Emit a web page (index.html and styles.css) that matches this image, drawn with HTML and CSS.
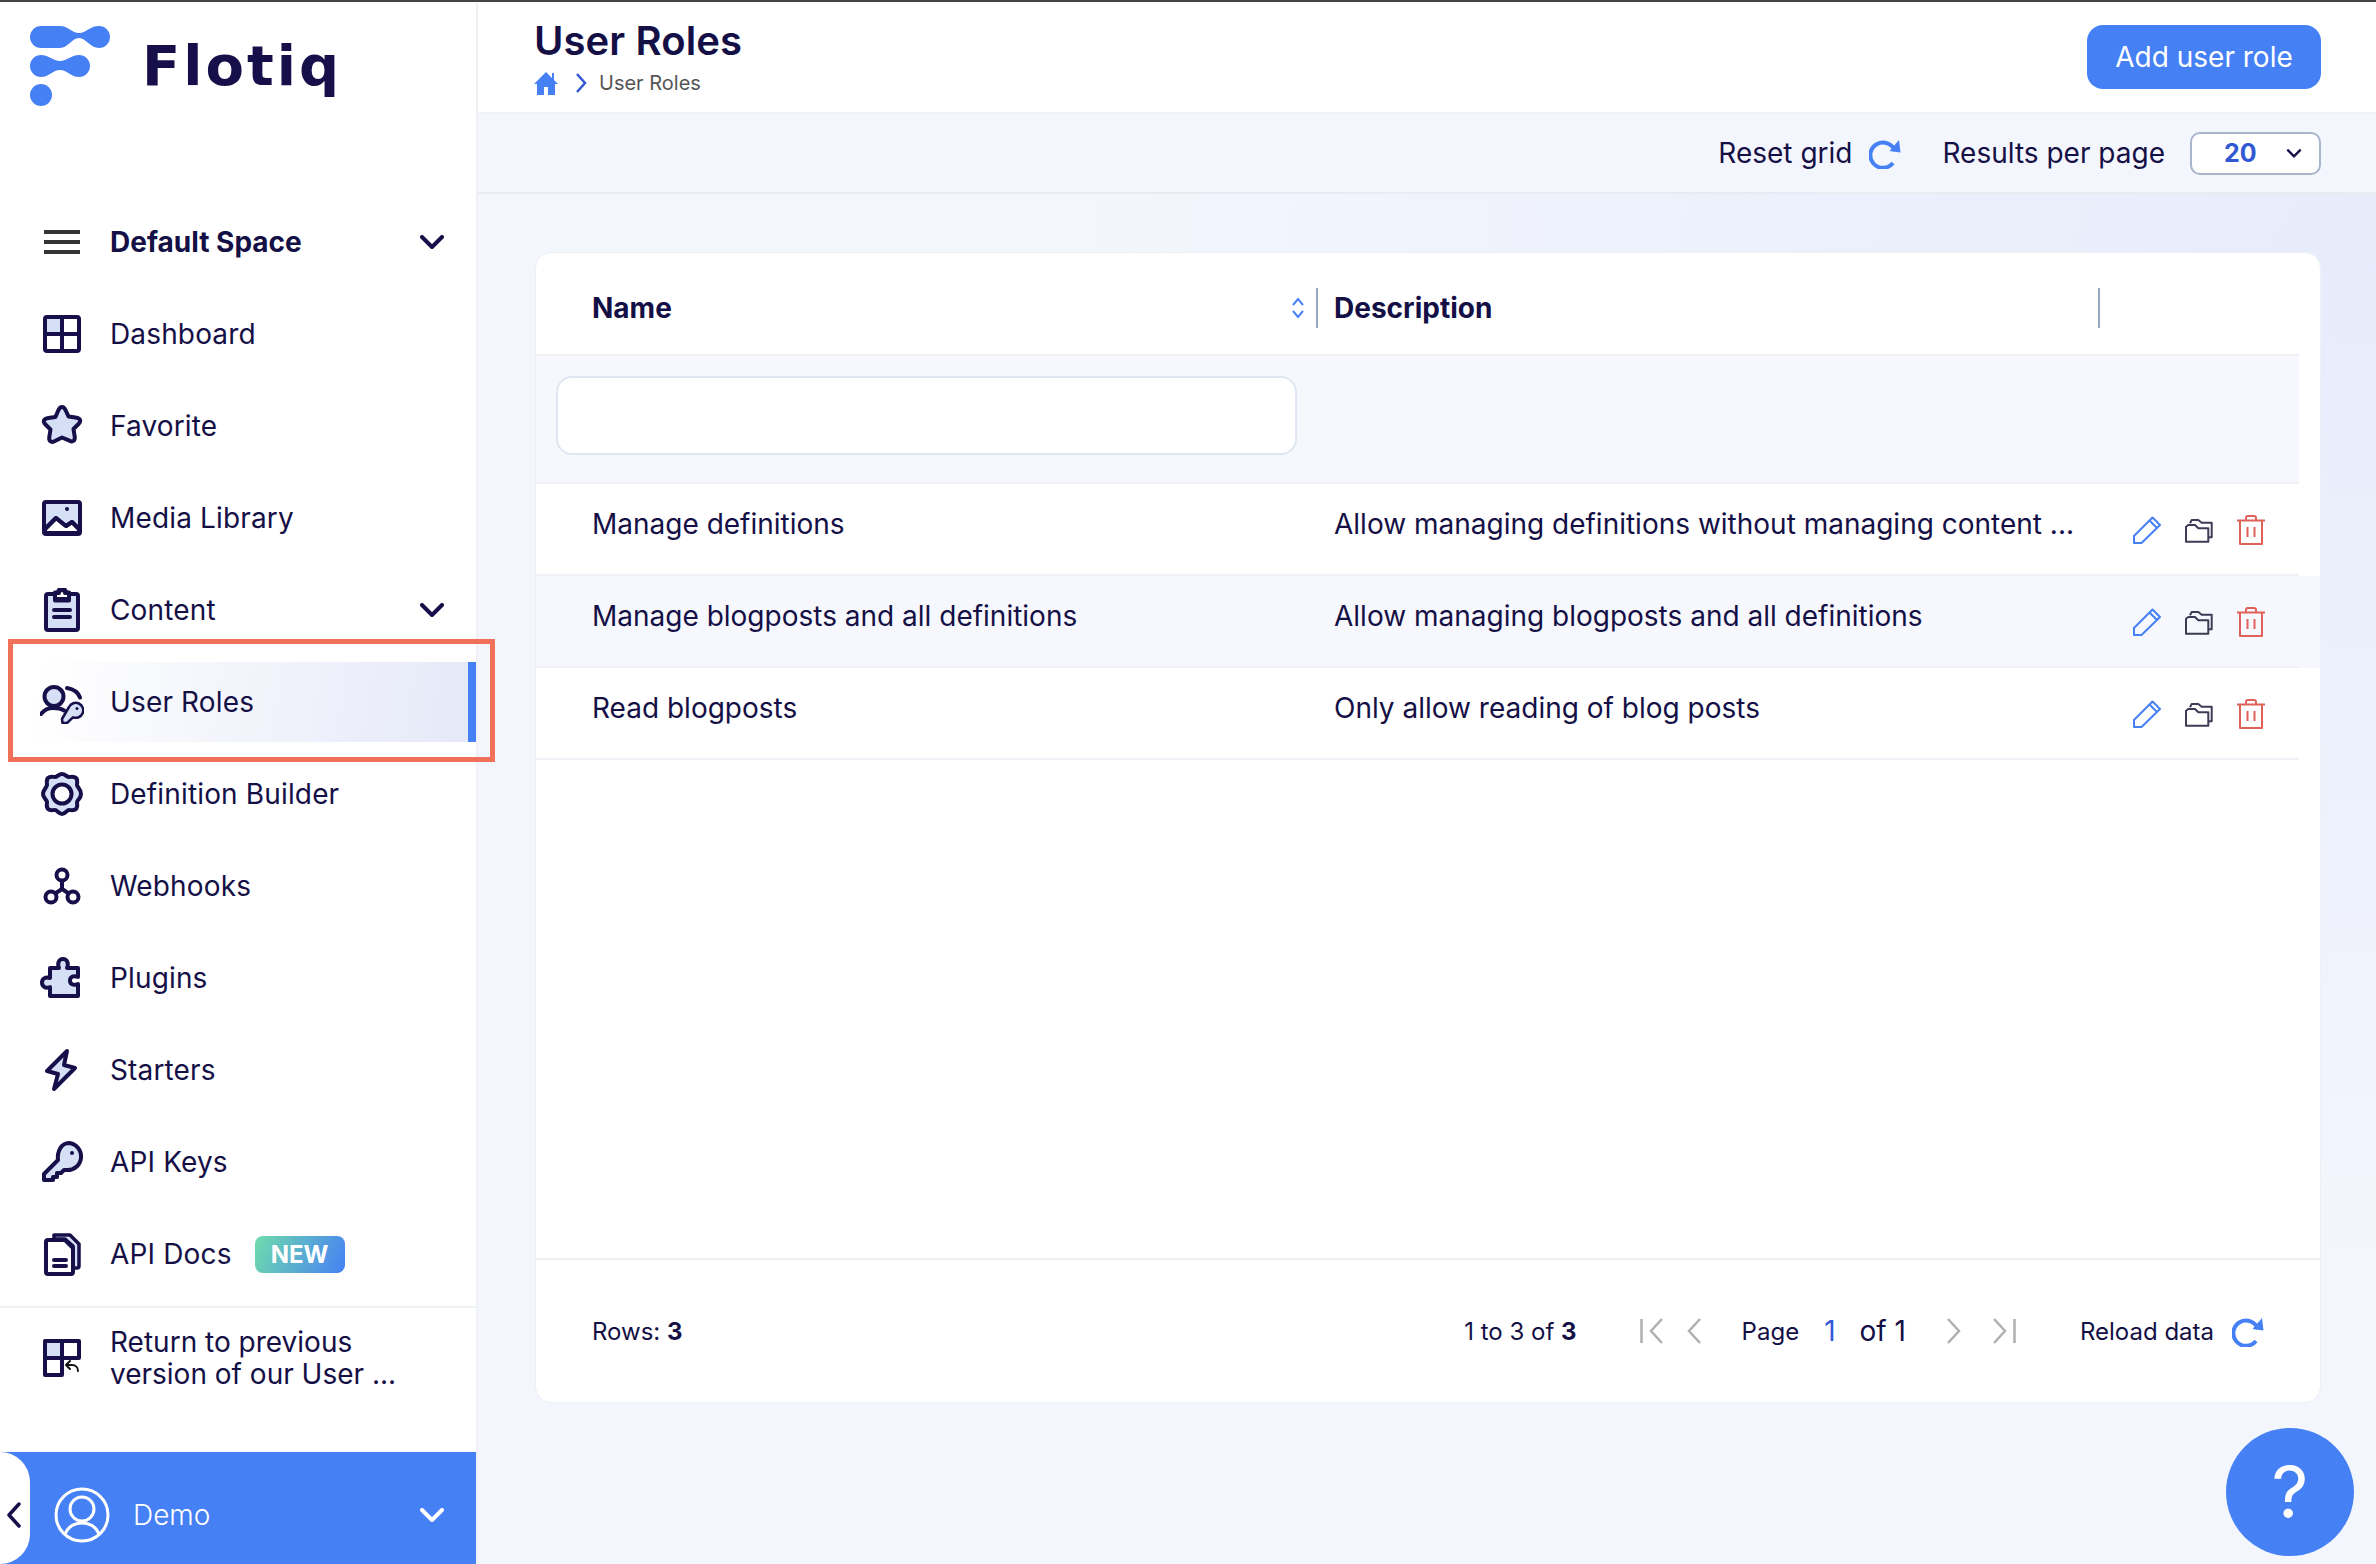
FILE: index.html
```html
<!DOCTYPE html>
<html lang="en">
  <head>
    <meta charset="UTF-8" />
    <title>User Roles</title>
    <link rel="stylesheet" href="styles.css">
  </head>
  <body>
    <svg class="defs" width="0" height="0">
      <symbol id="i-pencil" viewBox="0 0 28 28">
        <path d="M1 27v-7L19.500 1.500l7.500 7.500L8.500 27zM16.500 4.500l7.500 7.500" />
      </symbol>
      <symbol id="i-folder" viewBox="0 0 28 28">
        <path d="M1 25.700V10.700L3.300 9H10l3.300 3.300h10v13.400zM5 7.300L6.700 4h6.600l3.400 2.700h10v14.600H24" />
      </symbol>
      <symbol id="i-trash" viewBox="0 0 28 30">
        <path d="M0 5.500h28M3 5.500V29h22V5.500M9 5.500V3a2 2 0 0 1 2-2h6a2 2 0 0 1 2 2v2.500M10.500 12v10M17.500 12v10" />
      </symbol>
      <symbol id="i-reload" viewBox="0 0 32 32">
        <path class="stroke" d="M26 14A12.700 12.700 0 1 0 24 26" />
        <path class="solid" d="M30 3l1.500 12.500-11-1.500z" />
      </symbol>
      <symbol id="i-chevron" viewBox="0 0 24 14">
        <path d="M2 2l10 10L22 2" />
      </symbol>
    </svg>

    <aside class="sidebar">
      <div class="logo">
        <svg class="logo-mark" viewBox="0 0 80 80" width="80" height="80">
          <path d="M11 0H30C38 0 42 7 49 7C56 7 60 0 69 0A11 11 0 0 1 69 22C60 22 56 12 49 12C42 12 38 22 30 22H11A11 11 0 0 1 11 0Z" />
          <path d="M11 29C19 29 23 35 30 35C37 35 41 29 49 29A11 11 0 0 1 49 51C41 51 37 44 30 44C23 44 19 51 11 51A11 11 0 0 1 11 29Z" />
          <circle cx="11" cy="69" r="11" />
        </svg>
        <span class="logo-text">Flotiq</span>
      </div>

      <nav class="nav">
        <a class="nav-item nav-item-bold">
          <svg class="nav-icon" viewBox="0 0 44 44"><path class="bars" d="M4 12h36M4 22h36M4 32h36" /></svg>
          <span class="nav-label">Default Space</span>
          <svg class="nav-chevron"><use href="#i-chevron" /></svg>
        </a>
        <a class="nav-item">
          <svg class="nav-icon" viewBox="0 0 44 44">
            <path class="tint" d="M6 6h16v16H6z" />
            <rect x="5" y="5" width="34" height="34" rx="2" /><path d="M22 5v34M5 22h34" />
          </svg>
          <span class="nav-label">Dashboard</span>
        </a>
        <a class="nav-item">
          <svg class="nav-icon" viewBox="0 0 44 44">
            <path class="tinted" d="M22 3c2 0 3 1.500 4 4l2.500 5.500 7 1c5 .7 6 3.500 3 6.500l-5 5 1.200 7.500c.6 4-1.700 6-5.200 4.200L22 33.500l-7.500 3.700c-3.500 1.800-5.800-.2-5.200-4.200L10.500 25.500l-5-5c-3-3-2-5.800 3-6.500l7-1L18 7c1-2.500 2-4 4-4z" />
          </svg>
          <span class="nav-label">Favorite</span>
        </a>
        <a class="nav-item">
          <svg class="nav-icon" viewBox="0 0 44 44">
            <rect class="tinted" x="4" y="6" width="36" height="32" rx="2" />
            <path class="white" d="M5 33l11-11 10 8 6-4 7 7v4H5z" />
            <path d="M5 33l11-11 10 8 6-4 7 7" />
            <circle class="dot" cx="27" cy="13" r="2" />
          </svg>
          <span class="nav-label">Media Library</span>
        </a>
        <a class="nav-item">
          <svg class="nav-icon" viewBox="0 0 44 44">
            <rect class="tinted" x="6" y="6" width="32" height="36" rx="2" />
            <path class="white" d="M15 4.500h3a4 4 0 0 1 8 0h3v8H15z" />
            <path d="M15 10v-5h4a3 3 0 0 1 6 0h4v6H15M14 22h16M14 29h16" />
          </svg>
          <span class="nav-label">Content</span>
          <svg class="nav-chevron"><use href="#i-chevron" /></svg>
        </a>
        <a class="nav-item nav-item-active">
          <svg class="nav-icon" viewBox="0 0 44 44">
            <circle class="tinted" cx="14" cy="16.500" r="9.500" />
            <path d="M1 34c3-4 7-6 12-6 4 0 8 .500 11 2.500M27 8c6 1 11 4 13 9.500" />
            <path class="tinted thin" d="M29 27A7.500 7.500 0 1 1 33 37.300L27 43H22.500L22 39Z" />
            <circle class="dot" cx="37" cy="28.500" r="1.500" />
          </svg>
          <span class="nav-label">User Roles</span>
        </a>
        <a class="nav-item">
          <svg class="nav-icon" viewBox="0 0 44 44">
            <path class="tinted" d="M22 2c3 0 5 3 7 3s5-1 7 1 1 5 1 7 4 4 4 9-4 6-4 8 1 5-1 7-5 1-7 1-4 4-7 4-5-4-7-4-5 1-7-1-1-5-1-7-4-4-4-8 4-7 4-9-1-5 1-7 5-1 7-1 4-3 7-3z" />
            <circle class="white" cx="22" cy="22" r="9.500" />
          </svg>
          <span class="nav-label">Definition Builder</span>
        </a>
        <a class="nav-item">
          <svg class="nav-icon" viewBox="0 0 44 44">
            <circle cx="22" cy="11" r="5.500" /><circle cx="11" cy="33" r="5.500" /><circle cx="33" cy="33" r="5.500" />
            <path d="M22 17v8M22 25l-6 4M22 25l6 4" />
          </svg>
          <span class="nav-label">Webhooks</span>
        </a>
        <a class="nav-item">
          <svg class="nav-icon" viewBox="0 0 44 44">
            <path class="tinted" d="M10 12h9c-2-5 0-9 4-9s6 4 4 9h11v9c-5-2-8 0-8 3.500s3 5.500 8 3.500v12H10v-9c-5 2-8-1-8-4.500s3-6 8-4.500z" />
          </svg>
          <span class="nav-label">Plugins</span>
        </a>
        <a class="nav-item">
          <svg class="nav-icon" viewBox="0 0 44 44">
            <path class="tinted" d="M27 3L7 23l11 3-4 15 21-21-11-3z" />
          </svg>
          <span class="nav-label">Starters</span>
        </a>
        <a class="nav-item">
          <svg class="nav-icon" viewBox="0 0 44 44">
            <path class="tinted" d="M29 3a13.500 13.500 0 1 1-3 27l-2 0-3 3h-4v4h-4v3H4v-6l14-14c-1-8 3-17 11-17z" />
            <circle class="dot" cx="32" cy="13" r="2" />
          </svg>
          <span class="nav-label">API Keys</span>
        </a>
        <a class="nav-item">
          <svg class="nav-icon" viewBox="0 0 44 44">
            <path class="tinted thin-dark" d="M14 3h16l9 9v22a2 2 0 0 1-2 2h-4V14l-8-7H14z" />
            <path class="white" d="M8 8h17l8 8v24a2 2 0 0 1-2 2H8a2 2 0 0 1-2-2V10a2 2 0 0 1 2-2z" />
            <path d="M14 28h12M14 34h12" />
          </svg>
          <span class="nav-label">API Docs</span>
          <span class="badge-new">NEW</span>
        </a>
      </nav>

      <a class="return-item">
        <svg class="nav-icon" viewBox="0 0 44 44">
          <path class="tint" d="M6 6h16v16H6z" />
          <path d="M5 5h34v17H22v17H5zM22 5v17M5 22h17" />
          <path class="thin-arrow" d="M26 29h6c4 0 6 3 6 6M30 25l-4 4 4 4" />
        </svg>
        <span class="return-label">Return to previous version of our User ...</span>
      </a>

      <div class="user-bar">
        <div class="collapse">
          <svg viewBox="0 0 16 26" width="16" height="26"><path d="M13 2L3 13l10 11" /></svg>
        </div>
        <svg class="avatar" viewBox="0 0 56 56" width="56" height="56">
          <circle cx="28" cy="28" r="26" /><circle cx="28" cy="22" r="12" /><path d="M11 47c3-7 9-11 17-11s14 4 17 11" />
        </svg>
        <span class="user-name">Demo</span>
        <svg class="nav-chevron"><use href="#i-chevron" /></svg>
      </div>

      <div class="highlight"></div>
    </aside>

    <main class="main">
      <header class="page-header">
        <div class="page-heading">
          <h1 class="page-title">User Roles</h1>
          <div class="crumbs">
            <svg class="crumb-home" viewBox="0 0 24 24" width="24" height="24">
              <path d="M12 1L0 13h3v11h7v-8h4v8h7V13h3l-4-4V2h-2v5z" />
            </svg>
            <svg class="crumb-sep" viewBox="0 0 12 20" width="12" height="20"><path d="M2 1l8 9-8 9" /></svg>
            <span>User Roles</span>
          </div>
        </div>
        <div class="button">Add user role</div>
      </header>

      <div class="toolbar">
        <span>Reset grid</span>
        <svg class="reload toolbar-reload" width="32" height="32"><use href="#i-reload" /></svg>
        <span class="per-page">Results per page</span>
        <div class="select">
          <span class="select-value">20</span>
          <svg class="select-chevron" viewBox="0 0 24 14" width="16" height="10"><path d="M2 2l10 10L22 2" /></svg>
        </div>
      </div>

      <div class="content">
        <section class="card">
          <div class="table-head">
            <div class="head-cell head-name">
              <span>Name</span>
              <svg class="sort" viewBox="0 0 12 22" width="12" height="22"><path d="M1 8l5-6 5 6M1 14l5 6 5-6" /></svg>
            </div>
            <div class="head-cell head-desc"><span>Description</span></div>
            <div class="head-cell"></div>
          </div>
          <div class="filter-row">
            <div class="filter-input"></div>
          </div>

          <div class="row">
            <div class="row-inner">
              <div>Manage definitions</div>
              <div>Allow managing definitions without managing content ...</div>
              <div class="actions">
                <svg class="act act-edit"><use href="#i-pencil" /></svg>
                <svg class="act act-open"><use href="#i-folder" /></svg>
                <svg class="act act-del"><use href="#i-trash" /></svg>
              </div>
            </div>
          </div>
          <div class="row row-alt">
            <div class="row-inner">
              <div>Manage blogposts and all definitions</div>
              <div>Allow managing blogposts and all definitions</div>
              <div class="actions">
                <svg class="act act-edit"><use href="#i-pencil" /></svg>
                <svg class="act act-open"><use href="#i-folder" /></svg>
                <svg class="act act-del"><use href="#i-trash" /></svg>
              </div>
            </div>
          </div>
          <div class="row">
            <div class="row-inner">
              <div>Read blogposts</div>
              <div>Only allow reading of blog posts</div>
              <div class="actions">
                <svg class="act act-edit"><use href="#i-pencil" /></svg>
                <svg class="act act-open"><use href="#i-folder" /></svg>
                <svg class="act act-del"><use href="#i-trash" /></svg>
              </div>
            </div>
          </div>

          <div class="table-space"></div>

          <footer class="card-footer">
            <span>Rows: <b>3</b></span>
            <span class="range">1 to 3 of <b>3</b></span>
            <svg class="pager pager-first" viewBox="0 0 24 28" width="24" height="28"><path d="M1.500 2v24M22 2L11 14l11 12" /></svg>
            <svg class="pager pager-prev" viewBox="0 0 16 28" width="16" height="28"><path d="M14 2L3 14l11 12" /></svg>
            <span class="page-word">Page</span>
            <span class="page-num">1</span>
            <span class="page-of">of 1</span>
            <svg class="pager pager-next" viewBox="0 0 16 28" width="16" height="28"><path d="M2 2l11 12L2 26" /></svg>
            <svg class="pager pager-last" viewBox="0 0 24 28" width="24" height="28"><path d="M22.500 2v24M2 2l11 12L2 26" /></svg>
            <span class="reload-word">Reload data</span>
            <svg class="reload footer-reload" width="32" height="32"><use href="#i-reload" /></svg>
          </footer>
        </section>
      </div>

      <div class="help">?</div>
    </main>
  </body>
</html>
```

FILE: styles.css
```css
html,
body {
  height: 100%;
  margin: 0;
}

body {
  display: flex;
  height: 1564px;
  box-sizing: border-box;
  border-top: 2px solid #444;
  overflow: hidden;
  font-family: Inter, "Liberation Sans", sans-serif;
  font-size: 28px;
  color: #141046;
  background-color: #fff;
}

.defs {
  position: absolute;
}

/* sidebar */
.sidebar {
  position: relative;
  flex: none;
  width: 478px;
  box-sizing: border-box;
  border-right: 2px solid #f0f1f6;
  display: flex;
  flex-flow: column;
}
.logo {
  height: 194px;
  box-sizing: border-box;
  padding: 24px 0 0 30px;
  display: flex;
  align-items: flex-start;
}
.logo-mark {
  flex: none;
  fill: #4680f5;
}
.logo-text {
  margin: 5px 0 0 32px;
  font-family: "DejaVu Sans", Inter, sans-serif;
  font-size: 56px;
  line-height: 70px;
  font-weight: 700;
  letter-spacing: 3px;
  color: #170f49;
}
.nav-item {
  height: 92px;
  padding-left: 40px;
  display: flex;
  align-items: center;
}
.nav-label {
  letter-spacing: 0.15px;
}
.nav-item-bold .nav-label {
  font-weight: 700;
  letter-spacing: 0;
}
.nav-item-active {
  height: 80px;
  margin: 6px 0;
  background: linear-gradient(100deg, #fff 8%, #e5e9f8 100%);
  border-right: 8px solid #4680f5;
}
.nav-icon {
  flex: none;
  width: 44px;
  height: 44px;
  margin-right: 26px;
  fill: none;
  stroke: #170f49;
  stroke-width: 4;
  stroke-linejoin: round;
  stroke-linecap: round;
}
.nav-icon .bars {
  stroke: #333;
  stroke-linecap: butt;
}
.nav-icon .tint {
  fill: #d5dff6;
  stroke: none;
}
.nav-icon .tinted {
  fill: #d5dff6;
}
.nav-icon .white {
  fill: #fff;
}
.nav-icon .dot {
  fill: #170f49;
  stroke: none;
}
.nav-icon .thin {
  stroke-width: 2.5;
}
.nav-icon .thin-dark {
  stroke-width: 3.500;
}
.nav-icon .thin-arrow {
  stroke: #111;
  stroke-width: 2;
}
.nav-chevron {
  flex: none;
  width: 24px;
  height: 14px;
  margin-left: auto;
  margin-right: 32px;
  fill: none;
  stroke: #170f49;
  stroke-width: 4;
  stroke-linecap: round;
  stroke-linejoin: round;
}
.badge-new {
  margin-left: 23px;
  width: 90px;
  height: 37px;
  border-radius: 8px;
  background: linear-gradient(115deg, #6fdcab 0%, #4680f5 100%);
  color: #fff;
  font-size: 24px;
  font-weight: 700;
  line-height: 37px;
  text-align: center;
}
.return-item {
  margin-top: 6px;
  border-top: 2px solid #f0f1f6;
  padding: 18px 40px 0;
  display: flex;
  align-items: center;
}
.return-label {
  line-height: 32px;
  width: 310px;
}
.user-bar {
  margin-top: auto;
  height: 112px;
  background-color: #4680f5;
  display: flex;
  align-items: center;
  color: #fff;
}
.collapse {
  flex: none;
  align-self: stretch;
  width: 30px;
  background-color: #fff;
  border-radius: 0 30px 30px 0;
  display: flex;
  align-items: center;
  padding-left: 6px;
  box-sizing: border-box;
}
.collapse svg {
  margin-top: 14px;
  fill: none;
  stroke: #170f49;
  stroke-width: 3.500;
  stroke-linecap: round;
  stroke-linejoin: round;
}
.avatar {
  flex: none;
  margin-left: 24px;
  margin-top: 14px;
  fill: none;
  stroke: #fff;
  stroke-width: 3;
}
.user-name {
  margin-left: 23px;
  margin-top: 14px;
  font-weight: 300;
}
.user-bar .nav-chevron {
  margin-top: 14px;
  stroke: #fff;
}
.highlight {
  position: absolute;
  left: 8px;
  top: 637px;
  width: 487px;
  height: 123px;
  box-sizing: border-box;
  border: 5px solid #f0705a;
  z-index: 5;
}

/* main */
.main {
  position: relative;
  flex: auto;
  min-width: 0;
  display: flex;
  flex-flow: column;
}
.page-header {
  flex: none;
  height: 112px;
  box-sizing: border-box;
  border-bottom: 2px solid #f0f1f6;
  padding: 0 55px 0 56px;
  display: flex;
  justify-content: space-between;
  align-items: center;
}
.page-heading {
  margin-bottom: 2px;
}
.page-title {
  margin: 0;
  font-size: 40px;
  line-height: 48px;
  font-weight: 600;
  letter-spacing: 0.1px;
}
.crumbs {
  margin-top: 6px;
  display: flex;
  align-items: center;
  font-size: 20px;
  line-height: 24px;
  color: #555;
}
.crumb-home {
  fill: #4680f5;
}
.crumb-sep {
  margin: 0 12px 0 17px;
  fill: none;
  stroke: #3358d4;
  stroke-width: 2.5;
}
.button {
  width: 234px;
  height: 64px;
  border-radius: 16px;
  background-color: #4680f5;
  color: #fff;
  line-height: 64px;
  text-align: center;
}
.toolbar {
  flex: none;
  height: 80px;
  box-sizing: border-box;
  border-bottom: 2px solid #e9ebf2;
  background-color: #f4f6fd;
  padding: 0 55px 0 0;
  display: flex;
  justify-content: flex-end;
  align-items: center;
}
.reload {
  flex: none;
}
#i-reload .stroke {
  fill: none;
  stroke: #4680f5;
  stroke-width: 4;
}
#i-reload .solid {
  fill: #4680f5;
}
.toolbar-reload {
  margin-left: 17px;
}
.per-page {
  margin-left: 41px;
}
.select {
  margin-left: 25px;
  width: 131px;
  height: 43px;
  box-sizing: border-box;
  border: 2px solid #a9b5cd;
  border-radius: 10px;
  background-color: #fff;
  display: flex;
  align-items: center;
  padding: 0 10px 0 32px;
  justify-content: space-between;
}
.select-value {
  color: #3358d4;
  font-size: 25px;
  font-weight: 700;
}
.select-chevron {
  fill: none;
  stroke: #170f49;
  stroke-width: 3.500;
  margin-right: 7px;
}

.content {
  flex: auto;
  min-height: 0;
  box-sizing: border-box;
  padding: 58px 55px 161px 57px;
  background: radial-gradient(ellipse 1300px 1000px at 100% 5%, #e6ecfb 0%, #f4f6fd 100%);
}
.card {
  height: 100%;
  box-sizing: border-box;
  border: 1px solid #eef0f6;
  border-radius: 16px;
  background-color: #fff;
  display: flex;
  flex-flow: column;
}
.table-head {
  flex: none;
  height: 103px;
  margin-right: 21px;
  box-sizing: border-box;
  border-bottom: 2px solid #f0f1f6;
  padding-top: 8px;
  display: grid;
  grid-template-columns: 782px 782px 1fr;
  align-items: center;
  font-weight: 700;
}
.head-cell {
  height: 40px;
  display: flex;
  align-items: center;
}
.head-name {
  padding-left: 56px;
  padding-right: 12px;
  box-sizing: border-box;
  justify-content: space-between;
  border-right: 2px solid #9aa7c2;
}
.head-desc {
  padding-left: 16px;
  box-sizing: border-box;
  border-right: 2px solid #9aa7c2;
}
.sort {
  fill: none;
  stroke: #4680f5;
  stroke-width: 2;
}
.filter-row {
  flex: none;
  height: 128px;
  margin-right: 21px;
  box-sizing: border-box;
  border-bottom: 2px solid #f0f1f6;
  background-color: #f7f8fd;
  padding: 20px 0 0 20px;
}
.filter-input {
  width: 741px;
  height: 79px;
  box-sizing: border-box;
  border: 2px solid #e0e6f3;
  border-radius: 16px;
  background-color: #fff;
}
.row {
  flex: none;
}
.row-alt {
  background-color: #f7f8fd;
}
.row-inner {
  height: 92px;
  margin-right: 21px;
  box-sizing: border-box;
  border-bottom: 2px solid #f0f1f6;
  padding: 23px 0 0 56px;
  display: grid;
  grid-template-columns: 742px 799px 1fr;
  line-height: 34px;
}
.actions {
  display: flex;
  gap: 24px;
  height: 46px;
  align-items: center;
}
.act {
  flex: none;
  width: 28px;
  height: 28px;
  fill: none;
  stroke-width: 2;
  stroke-linejoin: round;
}
.act-edit {
  stroke: #4680f5;
}
.act-open {
  stroke: #3d3b55;
}
.act-del {
  height: 30px;
  stroke: #e0605a;
}
.table-space {
  flex: auto;
}
.card-footer {
  flex: none;
  height: 144px;
  box-sizing: border-box;
  border-top: 2px solid #eef0f6;
  padding: 0 56px;
  display: flex;
  align-items: center;
  font-size: 24px;
}
.range {
  margin-left: auto;
}
.pager {
  flex: none;
  fill: none;
  stroke: #b0b0b0;
  stroke-width: 2.5;
}
.pager-first {
  margin-left: 63px;
}
.pager-prev {
  margin-left: 22px;
}
.page-word {
  margin-left: 40px;
}
.page-num {
  margin-left: 25px;
  color: #3358d4;
  font-size: 28px;
}
.page-of {
  margin-left: 24px;
  font-size: 28px;
}
.pager-next {
  margin-left: 40px;
}
.pager-last {
  margin-left: 30px;
}
.reload-word {
  margin-left: 64px;
}
.footer-reload {
  margin-left: 18px;
}
.help {
  position: absolute;
  right: 22px;
  bottom: 8px;
  width: 128px;
  height: 128px;
  border-radius: 50%;
  background-color: #4680f5;
  color: #fff;
  font-size: 72px;
  font-weight: 400;
  line-height: 128px;
  text-align: center;
}
```
